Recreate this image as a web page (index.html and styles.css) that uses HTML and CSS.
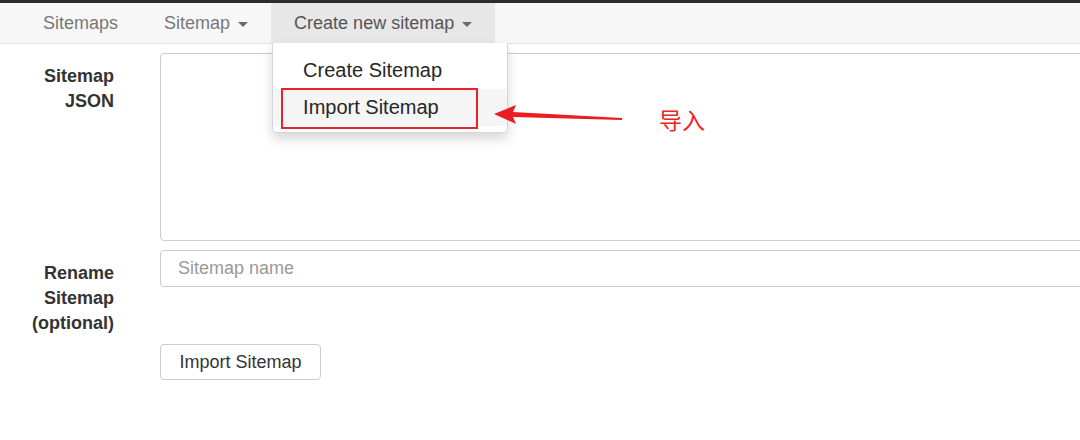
FILE: index.html
```html
<!DOCTYPE html>
<html>
<head>
<meta charset="utf-8">
<link rel="stylesheet" href="styles.css">
</head>
<body>
<div class="page">
  <nav class="navbar">
    <ul class="nav">
      <li class="nav-item">Sitemaps</li>
      <li class="nav-item">Sitemap <span class="caret"></span></li>
      <li class="nav-item active">Create new sitemap <span class="caret"></span><ul class="dropdown"><li class="dd-item">Create Sitemap</li><li class="dd-item hover">Import Sitemap</li></ul></li>
    </ul>
  </nav>

  <form class="form">
    <label class="label">Sitemap<br>JSON</label>
    <textarea class="control textarea"></textarea>

    <label class="label">Rename<br>Sitemap<br>(optional)</label>
    <input class="control input" type="text" placeholder="Sitemap name">

    <span></span>
    <div class="actions"><button type="button" class="btn">Import Sitemap</button></div>
  </form>

  <div class="highlight-box"></div>
  <svg class="arrow" width="140" height="30" viewBox="0 0 140 30">
    <polygon points="0,10 22,1 19,8 128,14 128,16 19,13 22,20" fill="#ec1c24"/>
  </svg>
  <div class="note">导入</div>
</div>
</body>
</html>
```

FILE: styles.css
```css
html, body {
  margin: 0;
  padding: 0;
  background: #fff;
  overflow: hidden;
}
body {
  font-family: "Liberation Sans", Arial, sans-serif;
  color: #333;
  width: 1080px;
  height: 440px;
}
.page {
  position: relative;
  width: 1080px;
  height: 440px;
  overflow: hidden;
  border-top: 3px solid #2c2c2e;
  box-sizing: border-box;
}
.navbar {
  background: #f7f7f7;
  border-bottom: 1px solid #e3e3e3;
  height: 40px;
}
.nav {
  list-style: none;
  margin: 0;
  padding: 0 0 0 20px;
  display: flex;
  height: 40px;
}
.nav-item {
  position: relative;
  padding: 0 23px;
  height: 40px;
  line-height: 40px;
  font-size: 18px;
  color: #777;
  white-space: nowrap;
}
.nav-item.active {
  background: #e7e7e7;
  color: #555;
}
.caret {
  display: inline-block;
  width: 0;
  height: 0;
  margin-left: 3px;
  border-top: 5px solid #6a6a6a;
  border-left: 5px solid transparent;
  border-right: 5px solid transparent;
  vertical-align: middle;
}
.dropdown {
  position: absolute;
  top: 40px;
  left: 1px;
  width: 236px;
  margin: 0;
  padding: 9px 0 6px;
  list-style: none;
  background: #fff;
  border: 1px solid #d6d6d6;
  border-top: none;
  border-radius: 0 0 5px 5px;
  box-shadow: 0 6px 12px rgba(0, 0, 0, 0.16);
  box-sizing: border-box;
  z-index: 5;
}
.dd-item {
  height: 37px;
  line-height: 37px;
  padding-left: 30px;
  font-size: 20px;
  color: #262626;
}
.dd-item.hover {
  background: #f5f5f5;
}
.form {
  display: grid;
  grid-template-columns: 114px 960px;
  column-gap: 46px;
  row-gap: 9px;
  padding-top: 9px;
}
.label {
  font-weight: bold;
  font-size: 18px;
  line-height: 25px;
  text-align: right;
  padding-top: 11px;
  color: #333;
}
.control {
  display: block;
  box-sizing: border-box;
  width: 100%;
  border: 1px solid #ccc;
  border-radius: 4px;
  font-family: "Liberation Sans", Arial, sans-serif;
  font-size: 18px;
  background: #fff;
  margin: 0;
}
.textarea {
  height: 188px;
  resize: none;
}
.input {
  height: 37px;
  padding: 0 17px;
  color: #555;
}
.input::placeholder {
  color: #999;
}
.actions {
  margin-top: -1px;
}
.btn {
  height: 36px;
  width: 161px;
  border: 1px solid #ccc;
  border-radius: 4px;
  background: #fff;
  font-family: "Liberation Sans", Arial, sans-serif;
  font-size: 18px;
  color: #333;
  padding: 0;
  margin: 0;
}
.highlight-box {
  position: absolute;
  left: 281px;
  top: 85px;
  width: 197px;
  height: 41px;
  border: 2px solid #e5232a;
  box-sizing: border-box;
  z-index: 6;
}
.arrow {
  position: absolute;
  left: 494px;
  top: 101px;
  z-index: 6;
}
.note {
  position: absolute;
  left: 659px;
  top: 101px;
  font-family: "Noto Sans CJK SC", sans-serif;
  font-size: 23px;
  line-height: 30px;
  color: #e8262a;
}
```
